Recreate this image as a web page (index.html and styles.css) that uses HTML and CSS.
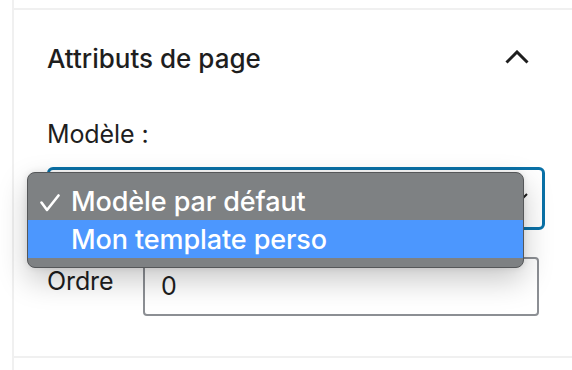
FILE: index.html
```html
<!DOCTYPE html>
<html lang="fr">
<head>
<meta charset="utf-8">
<link rel="stylesheet" href="styles.css">
</head>
<body>
<div class="sidebar">
  <div class="top-strip"></div>
  <section class="panel">
    <div class="panel-head">
      <h2 class="panel-title">Attributs de page</h2>
      <svg class="chevron" width="24" height="14" viewBox="0 0 24 14"><path d="M1.5 12.5 L12 2 L22.5 12.5" fill="none" stroke="#1e1e1e" stroke-width="3"/></svg>
    </div>
    <div class="field">
      <div class="label">Modèle :</div>
      <div class="select-wrap">
        <div class="select">
          <svg class="select-arrow" width="12" height="8" viewBox="0 0 12 8"><path d="M1 1 L6 6 L11 1" fill="none" stroke="#1e1e1e" stroke-width="2"/></svg>
        </div>
        <div class="menu">
          <div class="menu-item"><span class="check"><svg width="20" height="18" viewBox="0 0 20 18"><path d="M1.5 8.5 L7 16 L18.5 1.5" fill="none" stroke="#fff" stroke-width="2.6" stroke-linecap="round" stroke-linejoin="round"/></svg></span>Modèle par défaut</div>
          <div class="menu-item active"><span class="check"></span>Mon template perso</div>
        </div>
      </div>
    </div>
    <div class="order-row">
      <div class="label order-label">Ordre</div>
      <div class="input">0</div>
    </div>
  </section>
</div>
</body>
</html>
```

FILE: styles.css
```css
* { box-sizing: border-box; }
html, body { margin: 0; padding: 0; background: #fff; }
body {
  font-family: Inter, "Liberation Sans", sans-serif;
  color: #1e1e1e;
  width: 572px;
  height: 370px;
  overflow: hidden;
}
.sidebar {
  margin-left: 12px;
  border-left: 2px solid #f0f0f0;
  height: 370px;
}
.top-strip {
  height: 10px;
  border-bottom: 2px solid #f0f0f0;
}
.panel {
  padding: 0 27px 0 33px;
  height: 348px;
  border-bottom: 2px solid #f0f0f0;
}
.panel-head {
  height: 96px;
  display: flex;
  align-items: center;
  justify-content: space-between;
  padding-right: 16px;
}
.panel-title {
  margin: 0;
  font-size: 26px;
  font-weight: 500;
  letter-spacing: 0;
}
.chevron { display: block; margin-top: -2px; }
.label {
  font-size: 25px;
  line-height: 32px;
  letter-spacing: -0.1px;
}
.field { display: flex; flex-direction: column; gap: 17px; margin-top: 12px; }
.select-wrap { position: relative; }
.select {
  height: 63px;
  border: 3px solid #0a71a7;
  border-radius: 6px;
  background: #fff;
  position: relative;
}
.select-arrow { position: absolute; right: 14px; top: 23px; }
.menu {
  position: absolute;
  left: -20px;
  top: 5px;
  width: 497px;
  padding: 9px 0;
  background: #7e8183;
  border: 1px solid #555759;
  border-radius: 8px;
  box-shadow: 0 12px 30px rgba(0,0,0,0.22), 0 0 6px rgba(0,0,0,0.1);
  color: #fff;
  font-family: Inter, "Liberation Sans", sans-serif;
  font-weight: 500;
  font-size: 27px;
  letter-spacing: -0.1px;
}
.menu-item {
  height: 38px;
  display: flex;
  align-items: center;
}
.menu-item.active { background: #4c97fe; }
.check {
  width: 43px;
  padding-left: 12px;
  display: flex;
  align-items: center;
  padding-top: 4px;
}
.order-row {
  display: flex;
  align-items: flex-start;
  margin-top: 27px;
  padding-right: 6px;
}
.order-label { width: 96px; padding-top: 8px; }
.input {
  flex: 1;
  height: 59px;
  border: 2px solid #8c8f94;
  border-radius: 4px;
  font-size: 25px;
  padding: 12px 0 0 16px;
}
```
